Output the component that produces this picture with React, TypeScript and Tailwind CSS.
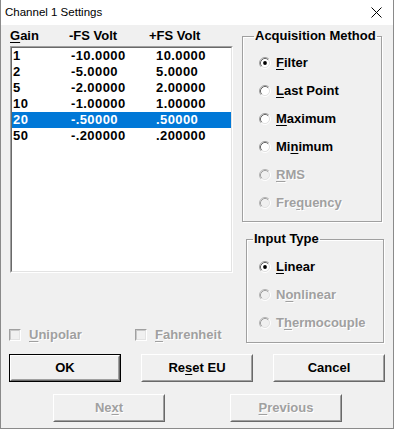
import React from 'react';

const rows = [
  ['1', '-10.0000', '10.0000'],
  ['2', '-5.0000', '5.0000'],
  ['5', '-2.00000', '2.00000'],
  ['10', '-1.00000', '1.00000'],
  ['20', '-.50000', '.50000'],
  ['50', '-.200000', '.200000'],
];

function U({ children }: { children: React.ReactNode }) {
  return <span className="underline decoration-1 underline-offset-[2px]">{children}</span>;
}

function Radio({ checked, disabled }: { checked?: boolean; disabled?: boolean }) {
  return (
    <svg width="12" height="12" viewBox="0 0 12 12" className="shrink-0">
      <circle cx="6" cy="6" r="4.2" fill={disabled ? '#f0f0f0' : '#ffffff'} />
      <path d="M2.11 9.89 A5.5 5.5 0 0 1 9.89 2.11" fill="none" stroke={disabled ? '#b4b4b4' : '#a0a0a0'} />
      <path d="M2.82 9.18 A4.5 4.5 0 0 1 9.18 2.82" fill="none" stroke={disabled ? '#a0a0a0' : '#696969'} />
      <path d="M9.89 2.11 A5.5 5.5 0 0 1 2.11 9.89" fill="none" stroke="#ffffff" />
      <path d="M9.18 2.82 A4.5 4.5 0 0 1 2.82 9.18" fill="none" stroke="#e3e3e3" />
      {checked && <circle cx="6" cy="6" r="1.9" fill="#000000" />}
    </svg>
  );
}

function RadioRow({ checked, disabled, children }: { checked?: boolean; disabled?: boolean; children: React.ReactNode }) {
  return (
    <div className="flex items-center gap-[5px] h-[16px]">
      <Radio checked={checked} disabled={disabled} />
      <span className={disabled ? 'text-[#a0a0a0] [text-shadow:1px_1px_0_#fff]' : 'text-black'}>{children}</span>
    </div>
  );
}

function Check({ children }: { children: React.ReactNode }) {
  return (
    <div className="flex items-center gap-[8px] h-[16px]">
      <div className="w-[12px] h-[12px] border border-t-[#a0a0a0] border-l-[#a0a0a0] border-r-white border-b-white">
        <div className="w-full h-full border border-t-[#c8c8c8] border-l-[#c8c8c8] border-r-[#e3e3e3] border-b-[#e3e3e3] bg-[#f0f0f0]" />
      </div>
      <span className="text-[#a0a0a0] [text-shadow:1px_1px_0_#fff]">{children}</span>
    </div>
  );
}

function Btn({ children, def, disabled }: { children: React.ReactNode; def?: boolean; disabled?: boolean }) {
  return (
    <div className={`w-[112px] h-[28px] ${def ? 'border border-black' : ''}`}>
      <div className="h-full border border-t-white border-l-white border-r-[#696969] border-b-[#696969]">
        <div
          className={`h-full flex items-center justify-center border border-t-[#f0f0f0] border-l-[#f0f0f0] border-r-[#a0a0a0] border-b-[#a0a0a0] bg-[#f0f0f0] ${
            disabled ? 'text-[#a0a0a0] [text-shadow:1px_1px_0_#fff]' : 'text-black'
          }`}
        >
          {children}
        </div>
      </div>
    </div>
  );
}

export default function App() {
  return (
    <div className="w-[394px] h-[431px] bg-white overflow-hidden font-['Liberation_Sans',Arial,sans-serif]">
      <div className="w-[394px] h-[429px] flex flex-col border-l border-r border-b border-[#8a8a8a]">
        <div className="h-[25px] bg-white flex items-center justify-between pl-[4px] pr-[11px]">
          <span className="text-[11.5px] text-black">Channel 1 Settings</span>
          <svg width="11" height="11" viewBox="0 0 11 11">
            <path d="M0.5 0.5 L10.5 10.5 M10.5 0.5 L0.5 10.5" stroke="#000" strokeWidth="1" />
          </svg>
        </div>

        <div className="flex-1 bg-[#f0f0f0] text-[13px] leading-[16px] font-bold">
          <div className="flex">
            <div className="w-[223px] ml-[9px] flex flex-col">
              <div className="grid grid-cols-[59px_80px_1fr] h-[16px] mt-[3px] text-black">
                <span><U>G</U>ain</span>
                <span>-FS Volt</span>
                <span>+FS Volt</span>
              </div>
              <div className="mt-[2px] h-[227px] border border-t-[#a0a0a0] border-l-[#a0a0a0] border-r-white border-b-white">
                <div className="h-full bg-white border border-t-[#696969] border-l-[#696969] border-r-[#e3e3e3] border-b-[#e3e3e3] tracking-[0.4px]">
                  {rows.map((r, i) => (
                    <div
                      key={r[0]}
                      className={`grid grid-cols-[58px_85px_1fr] pl-[1px] h-[16px] ${
                        i === 4 ? 'bg-[#0078d7] text-white' : 'text-black'
                      }`}
                    >
                      <span>{r[0]}</span>
                      <span>{r[1]}</span>
                      <span>{r[2]}</span>
                    </div>
                  ))}
                </div>
              </div>
              <div className="flex mt-[54px] -ml-[1px]">
                <div className="w-[126px]">
                  <Check><U>U</U>nipolar</Check>
                </div>
                <Check><U>F</U>ahrenheit</Check>
              </div>
            </div>

            <div className="ml-[9px] flex flex-col">
              <fieldset className="mt-[3px] w-[140px] border border-[#a0a0a0] shadow-[1px_1px_0_#fff,inset_1px_1px_0_#fff]">
                <legend className="ml-[11px] px-[1px] h-[16px] whitespace-nowrap text-black">Acquisition Method</legend>
                <div className="pl-[16px] pt-[11px] pb-[10px] flex flex-col gap-[12px]">
                  <RadioRow checked><U>F</U>ilter</RadioRow>
                  <RadioRow><U>L</U>ast Point</RadioRow>
                  <RadioRow><U>M</U>aximum</RadioRow>
                  <RadioRow>Mi<U>n</U>imum</RadioRow>
                  <RadioRow disabled><U>R</U>MS</RadioRow>
                  <RadioRow disabled>Fre<U>q</U>uency</RadioRow>
                </div>
              </fieldset>
              <fieldset className="mt-[9px] ml-[4px] w-[138px] border border-[#a0a0a0] shadow-[1px_1px_0_#fff,inset_1px_1px_0_#fff]">
                <legend className="ml-[6px] px-[1px] h-[16px] whitespace-nowrap text-black">Input Type</legend>
                <div className="pl-[12px] pt-[12px] pb-[11px] flex flex-col gap-[12px]">
                  <RadioRow checked><U>L</U>inear</RadioRow>
                  <RadioRow disabled>N<U>o</U>nlinear</RadioRow>
                  <RadioRow disabled>T<U>h</U>ermocouple</RadioRow>
                </div>
              </fieldset>
            </div>
          </div>

          <div className="flex gap-[20px] ml-[8px] mt-[11px]">
            <Btn def>OK</Btn>
            <Btn>Re<U>s</U>et EU</Btn>
            <Btn>Cancel</Btn>
          </div>
          <div className="flex gap-[65px] ml-[52px] mt-[12px]">
            <Btn disabled>Ne<U>x</U>t</Btn>
            <Btn disabled><U>P</U>revious</Btn>
          </div>
        </div>
      </div>
    </div>
  );
}
